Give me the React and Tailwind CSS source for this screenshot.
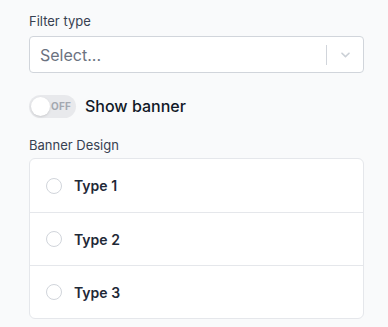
import React, { useState } from "react";

const TYPES = ["Type 1", "Type 2", "Type 3"];

export default function App() {
  const [on, setOn] = useState(false);
  const [picked, setPicked] = useState(null);

  return (
    <div
      className="min-h-[327px] bg-[#f9fafb] pl-[29px] pr-[24px] pt-[12px]"
      style={{ fontFamily: "Inter, 'Noto Sans', sans-serif" }}
    >
      {/* Filter type */}
      <label className="block text-[13px] leading-[18px] text-[#374151]">Filter type</label>
      <div className="mt-[6px] flex h-[37px] items-center rounded-[4px] border border-[#d1d5db] bg-white">
        <span className="flex-1 pl-[10px] text-[16px] text-[#6b7280]">Select...</span>
        <span className="h-[20px] w-px bg-[#d1d5db]" />
        <span className="flex w-[36px] justify-center text-[#cbd0d6]">
          <svg width="15" height="15" viewBox="0 0 20 20" fill="currentColor">
            <path d="M4.516 7.548c.436-.446 1.043-.481 1.576 0L10 11.295l3.908-3.747c.533-.481 1.141-.446 1.574 0 .436.445.408 1.197 0 1.615-.406.418-4.695 4.502-4.695 4.502a1.095 1.095 0 0 1-1.576 0S4.924 9.581 4.516 9.163c-.409-.418-.436-1.17 0-1.615z" />
          </svg>
        </span>
      </div>

      {/* Toggle */}
      <div className="mt-[21px] flex items-center gap-[9px]">
        <button
          onClick={() => setOn(!on)}
          className="relative flex h-[23px] w-[47px] items-center rounded-full bg-[#e8e9ec]"
        >
          <span className="absolute left-[2px] top-[2px] h-[19px] w-[19px] rounded-full bg-white shadow-sm" />
          <span className="ml-[22px] text-[10px] font-bold tracking-wide text-[#a3a8b0]">OFF</span>
        </button>
        <span className="text-[16px] font-medium text-[#111827]">Show banner</span>
      </div>

      {/* Banner design */}
      <label className="mt-[18px] block text-[13px] leading-[18px] text-[#374151]">Banner Design</label>
      <div className="mt-[4px] overflow-hidden rounded-[6px] border border-[#e5e7eb] bg-white">
        {TYPES.map((t, i) => (
          <button
            key={t}
            onClick={() => setPicked(t)}
            className={`flex h-[53px] w-full items-center gap-[12px] pl-[16px] text-left ${i > 0 ? "border-t border-[#e5e7eb]" : ""}`}
          >
            <span className="flex h-[16px] w-[16px] items-center justify-center rounded-full border border-[#d1d5db] bg-white">
              {picked === t && <span className="h-[6px] w-[6px] rounded-full bg-[#4f46e5]" />}
            </span>
            <span className="text-[14px] font-semibold text-[#1f2937]">{t}</span>
          </button>
        ))}
      </div>
    </div>
  );
}
